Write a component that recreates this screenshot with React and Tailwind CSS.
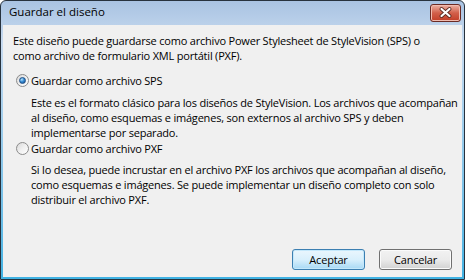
import React from "react";

function Radio({ checked }) {
  return (
    <span className="w-[13px] h-[13px] rounded-full border border-[#8b8b8b] bg-gradient-to-br from-[#d9d9d9] via-[#f0f0f0] to-[#ffffff] flex items-center justify-center shrink-0">
      {checked && (
        <span className="w-[7px] h-[7px] rounded-full border border-[#1f4f86] bg-[radial-gradient(circle_at_35%_30%,#b9e3fb_0%,#3a8fd6_45%,#0d4a8e_100%)]" />
      )}
    </span>
  );
}

function Button({ children, primary }) {
  return (
    <button
      className={
        primary
          ? "w-[73px] h-[21px] rounded-[3px] border border-[#3c7fb1] bg-gradient-to-b from-[#eaf6fd] from-0% via-[#d9f0fc] via-50% to-[#a7d9f5] to-100% text-black shadow-[inset_0_0_0_1px_#c4e8fb]"
          : "w-[73px] h-[21px] rounded-[3px] border border-[#707070] bg-gradient-to-b from-[#f2f2f2] from-0% via-[#ebebeb] via-50% to-[#d2d2d2] to-100% text-black shadow-[inset_0_0_0_1px_#fbfbfb]"
      }
    >
      {children}
    </button>
  );
}

export default function App() {
  return (
    <div
      className="w-[465px] h-[280px] bg-white"
      style={{ fontFamily: '"Open Sans", "Noto Sans", sans-serif' }}
    >
      <div className="w-full h-full rounded-t-[6px] border border-[#27323e] bg-gradient-to-b from-[#a9c3e2] from-0% via-[#c8dbf0] via-15% to-[#3fb2e3] to-100% flex flex-col px-[2px] pb-[2px]">
        {/* title bar */}
        <div className="h-[24px] shrink-0 flex items-center justify-between pl-[6px] pr-[1px] pb-[2px]">
          <span className="text-[11.5px] text-black leading-none">Guardar el diseño</span>
          <span className="w-[31px] h-[18px] mt-[1px] rounded-[3px] border border-[#6b2b24] bg-gradient-to-b from-[#eab0a3] from-0% via-[#d25f4a] via-50% to-[#c23d26] to-100% flex items-center justify-center shadow-[inset_0_0_0_1px_#f1bcb0]">
            <svg width="13" height="11" viewBox="0 0 13 11">
              <path d="M2.5 2 L10.5 9 M10.5 2 L2.5 9" stroke="#5a2a22" strokeWidth="3.8" strokeLinecap="round" />
              <path d="M2.5 2 L10.5 9 M10.5 2 L2.5 9" stroke="#ffffff" strokeWidth="2.2" strokeLinecap="round" />
            </svg>
          </span>
        </div>

        {/* client area */}
        <div className="flex-1 bg-[#f0f0f0] flex flex-col text-[11px] tracking-[-0.2px] leading-[15px] text-black whitespace-nowrap">
          <div className="pl-[10px] pt-[8px]">
            <p>Este diseño puede guardarse como archivo Power Stylesheet de StyleVision (SPS) o</p>
            <p>como archivo de formulario XML portátil (PXF).</p>
          </div>

          <div className="pl-[13px] mt-[10px] h-[15px] flex items-center gap-[2px]">
            <Radio checked />
            <span>Guardar como archivo SPS</span>
          </div>
          <div className="pl-[28px] mt-[7px]">
            <p>Este es el formato clásico para los diseños de StyleVision. Los archivos que acompañan</p>
            <p>al diseño, como esquemas e imágenes, son externos al archivo SPS y deben</p>
            <p>implementarse por separado.</p>
          </div>

          <div className="pl-[13px] mt-[1px] h-[15px] flex items-center gap-[2px]">
            <Radio />
            <span>Guardar como archivo PXF</span>
          </div>
          <div className="pl-[28px] mt-[6px]">
            <p>Si lo desea, puede incrustar en el archivo PXF los archivos que acompañan al diseño,</p>
            <p>como esquemas e imágenes. Se puede implementar un diseño completo con solo</p>
            <p>distribuir el archivo PXF.</p>
          </div>

          <div className="mt-auto flex justify-end gap-[14px] pr-[10px] pb-[7px]">
            <Button primary>Aceptar</Button>
            <Button>Cancelar</Button>
          </div>
        </div>
      </div>
    </div>
  );
}
